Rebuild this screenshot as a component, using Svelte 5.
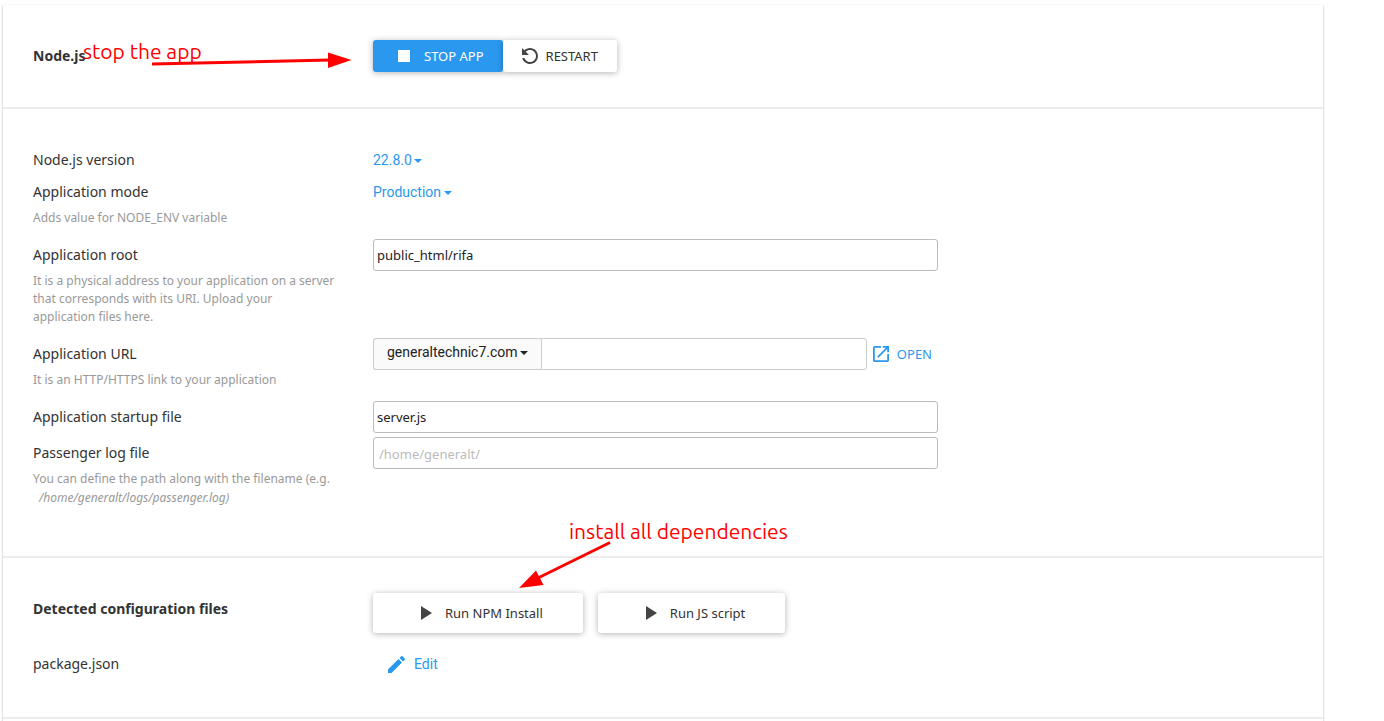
<script lang="ts">
  let version = $state('22.8.0');
  let mode = $state('Production');
  let root = $state('public_html/rifa');
  let domain = $state('generaltechnic7.com');
  let uri = $state('');
  let startup = $state('server.js');
  let log = $state('');
</script>

{#snippet play()}
  <svg class="icon" viewBox="0 0 24 24" aria-hidden="true"><path d="M8 5v14l11-7z" /></svg>
{/snippet}

<main class="page">
  <div class="panel">
    <section>
      <div class="row">
        <h2>Node.js</h2>
        <div class="actions joined">
          <button type="button" class="btn primary">
            <svg class="icon" viewBox="0 0 24 24" aria-hidden="true"><path d="M6 6h12v12H6z" /></svg>
            STOP APP
          </button>
          <button type="button" class="btn restart">
            <svg class="icon" viewBox="0 0 24 24" aria-hidden="true">
              <path d="M6.35 6.35C7.8 4.9 9.79 4 12 4c4.42 0 7.99 3.58 7.99 8s-3.57 8-7.99 8c-3.73 0-6.84-2.55-7.73-6h2.08c.82 2.33 3.04 4 5.65 4 3.31 0 6-2.69 6-6s-2.69-6-6-6c-1.66 0-3.14.69-4.22 1.78L11 11H4V4l2.35 2.35z" />
            </svg>
            RESTART
          </button>
        </div>
      </div>
    </section>

    <section class="settings">
      <div class="row">
        <label for="version">Node.js version</label>
        <div class="picker">
          <select id="version" bind:value={version}><option>22.8.0</option></select>
          <span class="caret"></span>
        </div>
      </div>
      <div class="row hinted">
        <div>
          <label for="mode">Application mode</label>
          <p>Adds value for NODE_ENV variable</p>
        </div>
        <div class="picker">
          <select id="mode" bind:value={mode}><option>Production</option></select>
          <span class="caret"></span>
        </div>
      </div>
      <div class="row hinted">
        <div>
          <label for="root">Application root</label>
          <p>It is a physical address to your application on a server that corresponds with its URI. Upload your application files here.</p>
        </div>
        <input id="root" type="text" bind:value={root} />
      </div>
      <div class="row hinted">
        <div>
          <label for="uri">Application URL</label>
          <p>It is an HTTP/HTTPS link to your application</p>
        </div>
        <div class="url">
          <div class="picker domain">
            <select aria-label="Domain" bind:value={domain}><option>generaltechnic7.com</option></select>
            <span class="caret"></span>
          </div>
          <input id="uri" type="text" bind:value={uri} />
          <a class="open" href="#open">
            <svg viewBox="3 3 18 18" aria-hidden="true">
              <path d="M19 19H5V5h7V3H5c-1.11 0-2 .9-2 2v14c0 1.1.89 2 2 2h14c1.1 0 2-.9 2-2v-7h-2v7zM14 3v2h3.59l-9.83 9.83 1.41 1.41L19 6.41V10h2V3h-7z" />
            </svg>
            OPEN
          </a>
        </div>
      </div>
      <div class="row spaced">
        <label for="startup">Application startup file</label>
        <input id="startup" type="text" bind:value={startup} />
      </div>
      <div class="row hinted">
        <div>
          <label for="log">Passenger log file</label>
          <p>You can define the path along with the filename (e.g. <em>/home/generalt/logs/passenger.log)</em></p>
        </div>
        <input id="log" class="log" type="text" placeholder="/home/generalt/" bind:value={log} />
      </div>
    </section>

    <section class="files">
      <div class="row">
        <h2>Detected configuration files</h2>
        <div class="actions">
          <button type="button" class="btn run">{@render play()}Run NPM Install</button>
          <button type="button" class="btn run">{@render play()}Run JS script</button>
        </div>
      </div>
      <div class="row">
        <span class="name">package.json</span>
        <a class="edit" href="#edit">
          <svg viewBox="3 3 18 18" aria-hidden="true">
            <path d="M3 17.25V21h3.75L17.81 9.94l-3.75-3.75L3 17.25zM20.71 7.04c.39-.39.39-1.02 0-1.41l-2.34-2.34c-.39-.39-1.02-.39-1.41 0l-1.83 1.83 3.75 3.75 1.83-1.83z" />
          </svg>
          Edit
        </a>
      </div>
    </section>
    <section class="rest"></section>
  </div>

  <span class="note stop-note">stop the app</span>
  <svg class="arrow stop-arrow" width="200" height="18" viewBox="0 0 200 18" aria-hidden="true">
    <path class="shaft" d="M0 13 178 9" />
    <path d="M176 1.5 199.500 9 176 17z" />
  </svg>
  <span class="note install-note">install all dependencies</span>
  <svg class="arrow install-arrow" width="92" height="48" viewBox="0 0 92 48" aria-hidden="true">
    <path class="shaft" d="M91 1.500 20 36.500" />
    <path d="M0 47 17 29.500 24.500 44z" />
  </svg>
</main>

<style>
  :global(body) {
    background: #fff;
    overflow: hidden;
  }
  .page {
    position: relative;
    box-sizing: border-box;
    height: 100vh;
    padding: 5px 61px 0 3px;
    overflow: hidden;
    color: #333;
    font: 14px/32px "Noto Sans", sans-serif;
  }
  .panel {
    min-height: 100%;
    box-shadow: 0 1px 2px rgba(0, 0, 0, 0.35);
  }
  section {
    padding: 35px 30px;
    border-bottom: 2px solid #ececec;
  }
  .settings {
    padding-bottom: 37px;
  }
  .files {
    display: grid;
    gap: 15px;
    padding-bottom: 37px;
  }
  .rest {
    border: 0;
  }
  .row {
    display: grid;
    grid-template-columns: 304px minmax(0, 565px);
    column-gap: 36px;
    align-items: start;
  }
  .hinted {
    padding-bottom: 12px;
  }
  .spaced {
    padding-bottom: 4px;
  }
  h2 {
    margin: 0;
    font-size: 14px;
    line-height: 32px;
    font-weight: 700;
  }
  label,
  .name {
    display: block;
  }
  p {
    margin: 0;
    padding-top: 1px;
    color: #999;
    font-size: 12px;
    line-height: 18px;
  }
  em {
    display: block;
    padding-left: 6px;
    line-height: 19px;
  }
  svg {
    fill: currentColor;
    flex: none;
  }
  .icon {
    width: 24px;
    height: 24px;
  }
  .actions {
    display: flex;
    gap: 15px;
  }
  .joined {
    gap: 0;
  }
  .btn {
    display: flex;
    align-items: center;
    gap: 8px;
    height: 32px;
    padding: 0 19px;
    border: 0;
    border-radius: 3px;
    background: #fff;
    color: #333;
    font: 13px/20px "Noto Sans", sans-serif;
    box-shadow: 0 1px 6px rgba(0, 0, 0, 0.3);
    cursor: pointer;
  }
  .btn .icon {
    color: #444;
  }
  .primary {
    background: #2b98f0;
    color: #fff;
  }
  .primary .icon {
    color: #fff;
  }
  .restart {
    gap: 4px;
    padding-left: 15px;
  }
  .run {
    height: 40px;
    padding: 0 40px;
  }
  .picker {
    display: flex;
    align-items: center;
    justify-self: start;
    gap: 2px;
    height: 32px;
    color: #2b98f0;
  }
  select {
    appearance: none;
    margin: 0;
    padding: 0;
    border: 0;
    background: transparent;
    color: inherit;
    font: 14px/20px Roboto, sans-serif;
    cursor: pointer;
  }
  .caret {
    margin-top: 1px;
    border: 4px solid transparent;
    border-top-color: currentColor;
    border-bottom: 0;
  }
  input {
    box-sizing: border-box;
    width: 100%;
    height: 32px;
    padding: 0 3px;
    border: 1px solid #bbb;
    border-radius: 3px;
    background: #fff;
    color: #222;
    font: 13px/20px "Noto Sans", sans-serif;
  }
  .log {
    padding: 2px 5px 0;
  }
  input::placeholder {
    color: #bbb;
    opacity: 1;
  }
  .url {
    display: flex;
    align-items: center;
  }
  .domain {
    box-sizing: border-box;
    padding: 0 13px 4px;
    border: 1px solid #ccc;
    border-right: 0;
    border-radius: 3px 0 0 3px;
    background: #fafafa;
    color: #222;
  }
  .url input {
    flex: 1;
    min-width: 0;
    border-color: #ccc;
    border-radius: 0 3px 3px 0;
  }
  a {
    display: flex;
    align-items: center;
    color: #2b98f0;
    text-decoration: none;
  }
  .open {
    gap: 8px;
    padding: 0 6px;
    font-size: 13px;
  }
  .open svg {
    width: 16px;
    height: 16px;
  }
  .edit {
    justify-self: start;
    gap: 9px;
    padding-left: 15px;
    font-family: Roboto, sans-serif;
  }
  .edit svg {
    width: 17px;
    height: 17px;
  }
  .note {
    position: absolute;
    color: #f00;
    font: 400 21px/28px Ubuntu, "Noto Sans", sans-serif;
    white-space: nowrap;
  }
  .arrow {
    position: absolute;
    color: #f00;
    pointer-events: none;
  }
  .shaft {
    fill: none;
    stroke: currentColor;
    stroke-width: 3;
  }
  .stop-note {
    left: 83px;
    top: 37px;
  }
  .stop-arrow {
    left: 152px;
    top: 51px;
  }
  .install-note {
    left: 569px;
    top: 517px;
  }
  .install-arrow {
    left: 519px;
    top: 541px;
  }
</style>
